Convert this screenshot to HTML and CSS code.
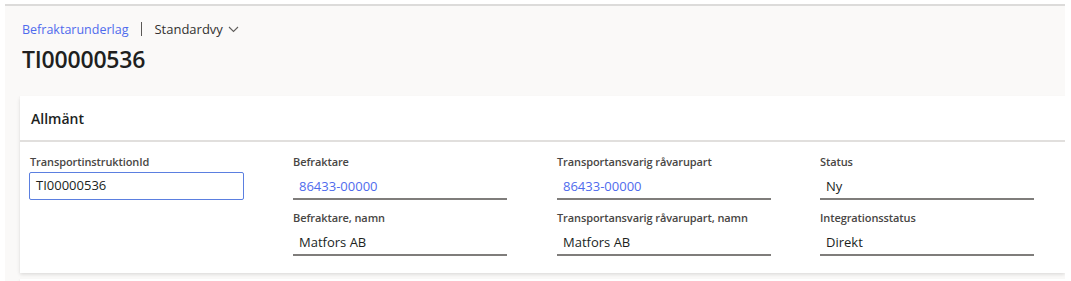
FILE: index.html
```html
<!DOCTYPE html>
<html lang="sv">
<head>
<meta charset="utf-8">
<link rel="stylesheet" href="styles.css">
</head>
<body>
<div class="frame">
  <div class="page-head">
    <div class="crumbs">
      <span class="crumb-link">Befraktarunderlag</span>
      <span class="crumb-sep"></span>
      <span class="crumb-view">Standardvy</span>
      <svg class="chev" width="11" height="7" viewBox="0 0 11 7"><path d="M1 1l4.5 4.5L10 1" fill="none" stroke="#605e5c" stroke-width="1.1"/></svg>
    </div>
    <h1 class="title">TI00000536</h1>
  </div>
  <div class="card">
    <div class="card-head">Allmänt</div>
    <div class="card-body">
      <div class="col">
        <div class="field">
          <div class="label">TransportinstruktionId</div>
          <div class="input">TI00000536</div>
        </div>
      </div>
      <div class="col">
        <div class="field">
          <div class="label">Befraktare</div>
          <div class="value link">86433-00000</div>
        </div>
        <div class="field">
          <div class="label">Befraktare, namn</div>
          <div class="value">Matfors AB</div>
        </div>
      </div>
      <div class="col">
        <div class="field">
          <div class="label">Transportansvarig råvarupart</div>
          <div class="value link">86433-00000</div>
        </div>
        <div class="field">
          <div class="label">Transportansvarig råvarupart, namn</div>
          <div class="value">Matfors AB</div>
        </div>
      </div>
      <div class="col">
        <div class="field">
          <div class="label">Status</div>
          <div class="value">Ny</div>
        </div>
        <div class="field">
          <div class="label">Integrationsstatus</div>
          <div class="value">Direkt</div>
        </div>
      </div>
    </div>
  </div>
  <div class="card next"></div>
</div>
</body>
</html>
```

FILE: styles.css
```css
html, body {
  margin: 0;
  padding: 0;
  background: #ffffff;
  font-family: "Open Sans", "Noto Sans", sans-serif;
  color: #201f1e;
  overflow: hidden;
}

.frame {
  margin: 4px 0 0 5px;
  width: 1060px;
  height: 277px;
  background: #faf9f8;
  border-top: 2px solid #dcdbda;
  overflow: hidden;
}

.page-head {
  padding: 14px 0 0 17px;
  height: 74px;
  box-sizing: border-box;
}

.crumbs {
  display: flex;
  align-items: center;
  font-size: 12.5px;
  height: 18px;
  color: #323130;
}

.crumb-link { color: #4f6bed; }
.crumb-sep {
  width: 1px;
  height: 14px;
  background: #5a5856;
  margin: 0 12px 0 13px;
}
.crumb-view { font-size: 13px; }
.chev { margin-left: 5px; margin-top: 1px; }

.title {
  margin: 7px 0 0 0;
  font-size: 23px;
  font-weight: 600;
  line-height: 28px;
  color: #201f1e;
  letter-spacing: -0.2px;
}

.card {
  margin-left: 15px;
  background: #ffffff;
  box-shadow: 0 1.6px 3.6px rgba(0,0,0,0.13), 0 0.3px 0.9px rgba(0,0,0,0.11);
  height: 177px;
  margin-top: 16px;
}

.card.next {
  margin-top: 6px;
  height: 40px;
}

.card-head {
  height: 46px;
  box-sizing: border-box;
  padding: 13px 0 0 11px;
  font-size: 14px;
  font-weight: 600;
  color: #201f1e;
  border-bottom: 2px solid #e1dfdd;
}

.card-body {
  display: grid;
  grid-template-columns: 263px 264px 263px 214px;
  padding: 12px 0 0 10px;
}

.field {
  display: flex;
  flex-direction: column;
  width: 214px;
  margin-bottom: 10px;
}

.label {
  font-size: 11px;
  font-weight: 600;
  color: #484644;
  height: 15px;
  line-height: 15px;
  letter-spacing: -0.1px;
}

.input {
  margin-top: 3px;
  height: 28px;
  box-sizing: border-box;
  border: 1.5px solid #5b7fe0;
  border-radius: 2px;
  padding: 0 6px;
  font-size: 13px;
  line-height: 25px;
  color: #201f1e;
  width: 215px;
  margin-left: -1px;
}

.value {
  margin-top: 4px;
  height: 27px;
  box-sizing: border-box;
  border-bottom: 2px solid #7f7d7b;
  padding: 0 6px;
  font-size: 13px;
  line-height: 26px;
  color: #201f1e;
}

.value.link { color: #4f6bed; }
```
